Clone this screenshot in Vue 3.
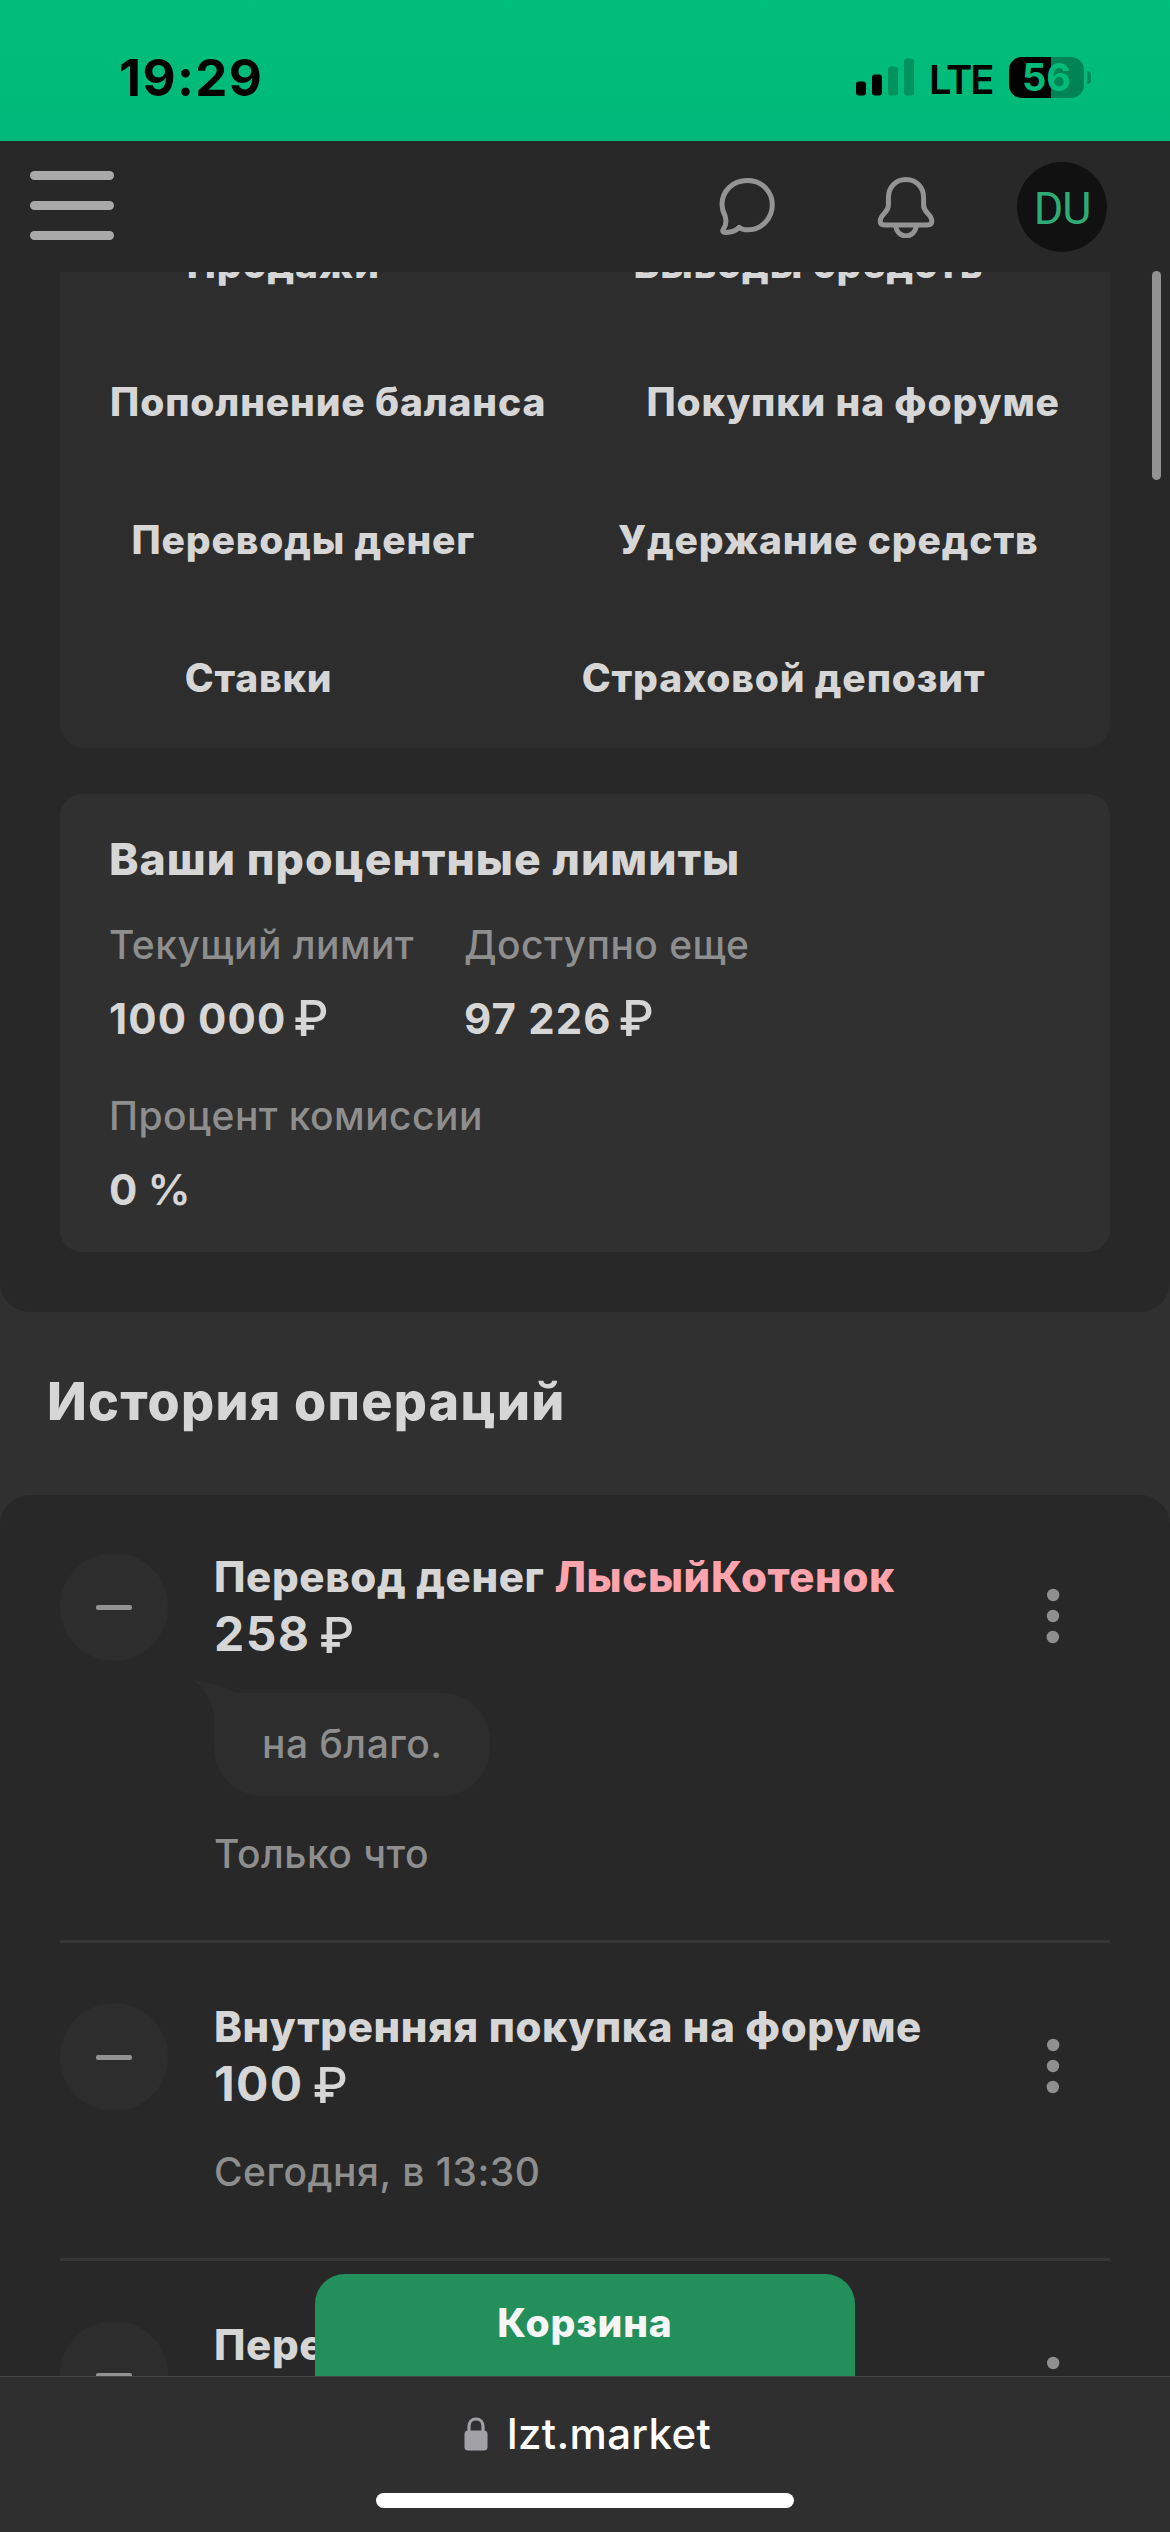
<script setup>
const tabRows = [
  ['Продажи', 'Выводы средств'],
  ['Пополнение баланса', 'Покупки на форуме'],
  ['Переводы денег', 'Удержание средств'],
  ['Ставки', 'Страховой депозит'],
]

const operations = [
  { title: 'Перевод денег', user: 'ЛысыйКотенок', amount: '258', comment: 'на благо.', time: 'Только что' },
  { title: 'Внутренняя покупка на форуме', amount: '100', time: 'Сегодня, в 13:30' },
  { title: 'Перевод', amount: '', time: '' },
]
</script>

<template>
  <div class="screen">
    <div class="status">
      <span class="clock">19:29</span>
      <div class="status-right">
        <svg class="signal" width="58" height="38" viewBox="0 0 58 38">
          <rect x="0" y="23.5" width="10" height="14" rx="3" />
          <rect x="16" y="16.5" width="10" height="21" rx="3" />
          <rect x="32" y="8.5" width="10" height="29" rx="3" opacity=".22" />
          <rect x="48" y="0.5" width="10" height="37" rx="3" opacity=".22" />
        </svg>
        <span class="lte">LTE</span>
        <div class="battery"><span>56</span></div>
        <i class="battery-tip"></i>
      </div>
    </div>

    <header class="header">
      <div class="burger"><i></i><i></i><i></i></div>
      <div class="header-right">
        <svg class="chat" width="60" height="60" viewBox="0 0 60 60">
          <path d="M4.200 53.500c3-4 3.300-9 1.800-13.800C4 36 3 32.500 3 28.600 3 14.600 14 4.600 28.500 4.600s24.800 11 24.800 24.500S42.500 53.800 29 53.800c-3.400 0-6.600-.5-8.800-2.500-3.300 3.500-8 5.300-13.800 5.100-2.500 0-3.200-1.300-2.200-2.900z" />
        </svg>
        <svg class="bell" width="60" height="62" viewBox="0 0 60 62">
          <path d="M30 3.500c-10.500 0-17.600 8-17.600 18.200v7.300c0 3.400-1.200 5.400-4 8.300-2.500 2.600-4.200 5-4.200 7.800 0 2.600 1.800 4 4.600 4h42.400c2.800 0 4.600-1.400 4.600-4 0-2.800-1.700-5.200-4.200-7.800-2.800-2.900-4-4.900-4-8.300v-7.300C47.600 11.500 40.500 3.500 30 3.500z" />
          <path d="M19.500 49.500c1 6.500 5 10.500 10.500 10.500s9.500-4 10.500-10.500" />
        </svg>
        <div class="avatar">DU</div>
      </div>
    </header>

    <main class="main">
      <section class="panel top-panel">
        <div class="tabs">
          <div v-for="(row, r) in tabRows" :key="r" class="tab-row">
            <a v-for="tab in row" :key="tab">{{ tab }}</a>
          </div>
        </div>
        <div class="limits">
          <h3>Ваши процентные лимиты</h3>
          <dl class="limit-row">
            <div class="limit first">
              <dt>Текущий лимит</dt>
              <dd>100 000<span class="rub">₽</span></dd>
            </div>
            <div class="limit">
              <dt>Доступно еще</dt>
              <dd>97 226<span class="rub">₽</span></dd>
            </div>
          </dl>
          <div class="limit second-line">
            <dt>Процент комиссии</dt>
            <dd>0 <span class="percent">%</span></dd>
          </div>
        </div>
      </section>

      <h2 class="history-title">История операций</h2>

      <section class="panel list">
        <article v-for="(op, i) in operations" :key="i" class="op">
          <div class="op-icon"><i></i></div>
          <div class="op-body">
            <div class="op-title">{{ op.title }} <b v-if="op.user">{{ op.user }}</b></div>
            <div v-if="op.amount" class="op-amount">{{ op.amount }}<span class="rub">₽</span></div>
            <div v-if="op.comment" class="bubble">
              <svg class="tail" width="50" height="40" viewBox="0 0 50 40"><path d="M0 0c14 3 30 4 42 13L21 36C19 20 12 9 0 0z" /></svg>
              {{ op.comment }}
            </div>
            <div v-if="op.time" class="op-time">{{ op.time }}</div>
          </div>
          <svg class="dots" width="14" height="56" viewBox="0 0 14 56">
            <circle cx="7.200" cy="7" r="6.200" /><circle cx="7" cy="28" r="6.200" /><circle cx="6.800" cy="49" r="6.200" />
          </svg>
        </article>
      </section>

      <div class="cart">Корзина</div>
    </main>

    <footer class="browser-bar">
      <div class="address">
        <svg width="24" height="34" viewBox="0 0 24 34">
          <path d="M5 15V9.500C5 4.800 7.800 2 12 2s7 2.800 7 7.500V15" fill="none" stroke="#a2a1a7" stroke-width="3.200" />
          <rect x="0.500" y="13.500" width="23" height="20" rx="3.500" fill="#a2a1a7" />
        </svg>
        <span>lzt.market</span>
      </div>
      <div class="home-bar"></div>
    </footer>

    <i class="scrollbar"></i>
  </div>
</template>

<style>
body {
  margin: 0;
  background: #303030;
}
</style>

<style scoped>
.screen {
  position: relative;
  display: flex;
  flex-direction: column;
  width: 1170px;
  height: 2532px;
  overflow: hidden;
  background: #303030;
  color: #d6d6d6;
  font-family: Inter, "Noto Sans", sans-serif;
}

.status {
  box-sizing: border-box;
  flex: none;
  display: flex;
  justify-content: space-between;
  height: 141px;
  padding: 0 79px 0 119px;
  background: linear-gradient(#00bf7a, #00b87a);
  color: #000;
}
.clock {
  margin-top: 48px;
  font-size: 51px;
  line-height: 60px;
  font-weight: 700;
  letter-spacing: 1.4px;
}
.status-right {
  display: flex;
  align-items: flex-start;
}
.signal {
  margin-top: 58px;
}
.lte {
  width: 78px;
  box-sizing: border-box;
  padding-left: 15px;
  margin-top: 55px;
  font-size: 40px;
  line-height: 50px;
  font-weight: 600;
  letter-spacing: -2px;
}
.battery {
  margin-left: 17px;
  margin-top: 57px;
  width: 75px;
  height: 41px;
  border-radius: 13px;
  background: linear-gradient(90deg, #000 56%, #008455 56%);
  color: #00bb7a;
  font-size: 38px;
  line-height: 41px;
  font-weight: 700;
  text-align: center;
}
.battery-tip {
  margin: 71px 0 0 3px;
  width: 4px;
  height: 13px;
  border-radius: 0 4px 4px 0;
  background: #008c5a;
}

.header {
  box-sizing: border-box;
  flex: none;
  display: flex;
  justify-content: space-between;
  height: 131px;
  padding: 0 63px 0 30px;
  background: #282828;
}
.burger {
  display: flex;
  flex-direction: column;
  gap: 21px;
  margin-top: 30px;
}
.burger i {
  width: 84px;
  height: 9px;
  border-radius: 5px;
  background: #a9a9a9;
}
.header-right {
  display: flex;
}
.chat,
.bell {
  fill: none;
  stroke: #949494;
  stroke-width: 5px;
  stroke-linejoin: round;
}
.chat {
  margin-top: 35px;
}
.bell {
  margin: 35px 81px 0 97px;
}
.avatar {
  width: 90px;
  height: 90px;
  margin-top: 21px;
  border-radius: 50%;
  background: #111;
  color: #2fac75;
  font: 400 45px/93px Roboto, sans-serif;
  letter-spacing: -1px;
  text-align: center;
}

.main {
  position: relative;
  flex: none;
  height: 2104px;
  overflow: hidden;
}
.panel {
  background: #282828;
}
.top-panel {
  margin-top: -76px;
  padding: 0 60px 60px;
  border-radius: 0 0 30px 30px;
}
.tabs {
  border-radius: 0 0 24px 24px;
  background: #2d2d2d;
}
.tab-row {
  display: flex;
  height: 138px;
}
.tab-row a {
  flex: 1 1 auto;
  text-align: center;
  font-size: 39px;
  line-height: 136px;
  font-weight: 800;
  letter-spacing: 0.850px;
}
.limits {
  box-sizing: border-box;
  height: 458px;
  margin-top: 46px;
  padding: 35px 49px 0;
  border-radius: 22px;
  background: #303030;
}
.limits h3 {
  margin: 0 0 32px;
  font-size: 44.500px;
  line-height: 60px;
  font-weight: 800;
  letter-spacing: 1.020px;
}
.limit-row {
  display: flex;
  margin: 0 0 48px;
}
.limit.first {
  width: 355px;
}
.limit dt {
  color: #8e8e8e;
  font-size: 39px;
  line-height: 48px;
  font-weight: 500;
  letter-spacing: 0.450px;
}
.limit dd {
  margin: 25px 0 0;
  font-size: 42px;
  line-height: 50px;
  font-weight: 750;
  letter-spacing: 1.100px;
}
.limit dd .percent {
  margin-left: -2px;
  font-size: 43px;
  line-height: 1px;
  font-weight: 600;
}
.rub {
  margin-left: 7px;
  font-size: 49px;
  line-height: 1px;
  font-weight: 500;
  vertical-align: -2px;
}

.history-title {
  box-sizing: border-box;
  height: 183px;
  margin: 0;
  padding: 60px 47px 0;
  font-size: 52px;
  line-height: 60px;
  font-weight: 800;
  letter-spacing: 1.250px;
}

.list {
  padding: 0 60px;
  border-radius: 30px 30px 0 0;
}
.op {
  display: flex;
  align-items: flex-start;
  padding: 57px 0 62px;
  border-bottom: 3px solid #363636;
}
.op:first-child {
  padding-top: 55px;
}
.op:last-child {
  padding-bottom: 120px;
}
.op-icon {
  display: flex;
  align-items: center;
  justify-content: center;
  width: 108px;
  height: 108px;
  margin: 3px 46px 0 0;
  border-radius: 50%;
  background: #2d2d2d;
}
.op-icon i {
  width: 36px;
  height: 5px;
  border-radius: 2px;
  background: #929292;
}
.op-body {
  flex: 1;
}
.op-title {
  font-size: 42px;
  line-height: 54px;
  font-weight: 800;
  letter-spacing: 0.640px;
  white-space: nowrap;
}
.op-title b {
  color: #ffa3ac;
  font-weight: 800;
}
.op-amount {
  font-size: 48px;
  line-height: 60px;
  font-weight: 750;
  letter-spacing: 1.400px;
}
.op-amount .rub {
  margin-left: 9px;
}
.bubble {
  position: relative;
  width: max-content;
  height: 103px;
  margin: 29px 0 0;
  padding: 0 47px 0 48px;
  border-radius: 12px 48px 48px 48px;
  background: #2d2d2d;
  color: #8e8e8e;
  font-size: 39px;
  line-height: 101px;
  font-weight: 500;
  letter-spacing: 0.500px;
}
.tail {
  position: absolute;
  left: -21px;
  top: -13px;
  fill: #2d2d2d;
}
.op-time {
  margin-top: 34px;
  color: #8e8e8e;
  font-size: 39px;
  line-height: 48px;
  font-weight: 500;
  letter-spacing: 0.500px;
}
.dots {
  margin: 38px 50px 0 0;
  fill: #8f8f8f;
}

.cart {
  position: absolute;
  left: 315px;
  bottom: 0;
  width: 540px;
  height: 102px;
  border-radius: 30px 30px 0 0;
  background: #23905c;
  color: #f5f5f5;
  font-size: 39px;
  line-height: 98px;
  font-weight: 800;
  letter-spacing: 0.850px;
  text-align: center;
}

.browser-bar {
  box-sizing: border-box;
  flex: none;
  height: 156px;
  border-top: 1px solid #484848;
  background: #2f2f2f;
}
.address {
  display: flex;
  align-items: flex-start;
  gap: 19px;
  margin: 32px 0 0 464px;
  color: #fff;
  font-size: 42px;
  line-height: 50px;
  font-weight: 500;
  letter-spacing: 0.350px;
}
.address svg {
  margin-top: 8px;
}
.home-bar {
  width: 418px;
  height: 15px;
  margin: 34px auto 0;
  border-radius: 8px;
  background: #fff;
}
.scrollbar {
  position: absolute;
  left: 1152px;
  top: 271px;
  width: 9px;
  height: 209px;
  border-radius: 5px;
  background: #929292;
}
</style>
